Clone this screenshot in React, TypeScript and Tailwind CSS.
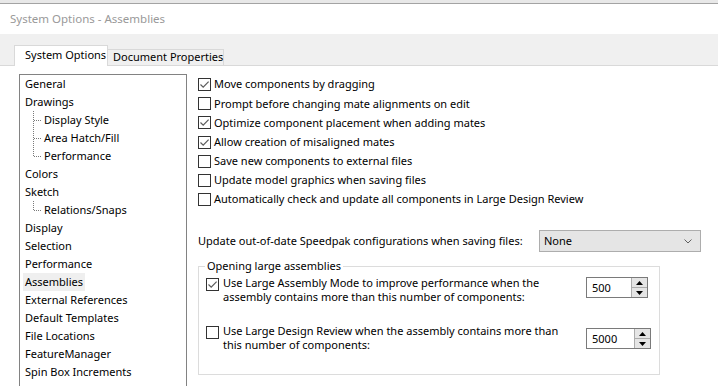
import React from 'react';

const font = { fontFamily: '"Noto Sans", "Liberation Sans", Arial, sans-serif' };

const Checkbox: React.FC<{ checked?: boolean }> = ({ checked }) => (
  <span className="flex h-[13px] w-[13px] shrink-0 items-center justify-center border border-[#333333] bg-white">
    {checked && (
      <svg width="11" height="11" viewBox="0 0 11 11">
        <path d="M1.5 5.5 L4.2 8.2 L9.6 2.6" fill="none" stroke="#5c5c5c" strokeWidth="1.2" />
      </svg>
    )}
  </span>
);

interface TreeItem {
  label: string;
  child?: boolean;
  last?: boolean;
  selected?: boolean;
}

const treeItems: TreeItem[] = [
  { label: 'General' },
  { label: 'Drawings' },
  { label: 'Display Style', child: true },
  { label: 'Area Hatch/Fill', child: true },
  { label: 'Performance', child: true, last: true },
  { label: 'Colors' },
  { label: 'Sketch' },
  { label: 'Relations/Snaps', child: true, last: true },
  { label: 'Display' },
  { label: 'Selection' },
  { label: 'Performance' },
  { label: 'Assemblies', selected: true },
  { label: 'External References' },
  { label: 'Default Templates' },
  { label: 'File Locations' },
  { label: 'FeatureManager' },
  { label: 'Spin Box Increments' },
  { label: 'View' },
];

const options = [
  { label: 'Move components by dragging', checked: true },
  { label: 'Prompt before changing mate alignments on edit', checked: false },
  { label: 'Optimize component placement when adding mates', checked: true },
  { label: 'Allow creation of misaligned mates', checked: true },
  { label: 'Save new components to external files', checked: false },
  { label: 'Update model graphics when saving files', checked: false },
  { label: 'Automatically check and update all components in Large Design Review', checked: false },
];

const Spinner: React.FC<{ value: string; width: string }> = ({ value, width }) => (
  <div className={`flex h-[21px] ${width} shrink-0 border border-[#7a7a7a] bg-white`}>
    <div className="flex flex-1 items-center pl-[5px]">{value}</div>
    <div className="flex w-[16px] flex-col border-l border-[#acacac]">
      <div className="flex flex-1 items-center justify-center border-b border-[#acacac] bg-[#e5e5e5]">
        <svg width="7" height="4" viewBox="0 0 7 4">
          <path d="M0 4 L3.5 0 L7 4 Z" fill="#000000" />
        </svg>
      </div>
      <div className="flex flex-1 items-center justify-center bg-[#e5e5e5]">
        <svg width="7" height="4" viewBox="0 0 7 4">
          <path d="M0 0 L3.5 4 L7 0 Z" fill="#000000" />
        </svg>
      </div>
    </div>
  </div>
);

const App: React.FC = () => {
  return (
    <div className="flex h-[386px] w-[718px] flex-col overflow-hidden bg-white text-[11px] text-black" style={font}>
      {/* Title bar */}
      <div className="h-[4px] shrink-0 border-b border-[#a3a3a3] bg-[#e8e8e8]"></div>
      <div className="flex h-[30px] shrink-0 items-center pl-[10px] text-[11.5px] text-[#999999]">System Options - Assemblies</div>

      {/* Tabs */}
      <div className="flex h-[32px] shrink-0 items-end border-b border-[#d9d9d9] bg-[#f0f0f0] pl-[14px]">
        <div className="relative mb-[-1px] flex h-[21px] w-[94px] items-center whitespace-nowrap border-x border-t border-[#d9d9d9] bg-white pb-[1px] pl-[10px]">
          System Options
        </div>
        <div className="flex h-[16px] w-[116px] items-center whitespace-nowrap border-r border-t border-[#d9d9d9] bg-[#f0f0f0] pl-[5px]">
          Document Properties
        </div>
      </div>

      {/* Content */}
      <div className="flex min-h-0 flex-1 items-start bg-white">
        {/* Tree */}
        <div className="ml-[19px] mt-[8px] w-[168px] shrink-0 border border-[#828282] bg-white">
          {treeItems.map((item, i) => (
            <div key={i} className={`flex h-[18px] items-center whitespace-nowrap ${item.child ? '' : 'pl-[3px]'}`}>
              {item.child && (
                <svg width="22" height="18" viewBox="0 0 22 18" className="shrink-0">
                  <line x1="13.5" y1="0" x2="13.5" y2={item.last ? 9 : 18} stroke="#7a7a7a" strokeDasharray="1 1" />
                  <line x1="14" y1="9.5" x2="22" y2="9.5" stroke="#7a7a7a" strokeDasharray="1 1" />
                </svg>
              )}
              <span className={`flex h-[18px] items-center px-[2px] ${item.selected ? 'bg-[#efefef]' : ''}`}>
                {item.label}
              </span>
            </div>
          ))}
        </div>

        {/* Options */}
        <div className="ml-[11px] flex flex-1 flex-col pt-[9px]">
          {options.map((opt, i) => (
            <div key={i} className="flex h-[19.2px] items-center gap-[3px] whitespace-nowrap">
              <Checkbox checked={opt.checked} />
              <span>{opt.label}</span>
            </div>
          ))}

          <div className="mt-[21px] flex h-[22px] items-center">
            <span className="w-[341px] whitespace-nowrap">Update out-of-date Speedpak configurations when saving files:</span>
            <div className="flex h-[22px] w-[162px] items-center justify-between border border-[#adadad] bg-[#e5e5e5] pl-[4px] pr-[8px]">
              <span>None</span>
              <svg width="8" height="5" viewBox="0 0 8 5">
                <path d="M0.5 0.5 L4 4 L7.5 0.5" fill="none" stroke="#606060" strokeWidth="1" />
              </svg>
            </div>
          </div>

          <fieldset className="mt-[6px] h-[117px] w-[462px] shrink-0 border border-[#dcdcdc]">
            <legend className="ml-[6px] px-[2px] leading-[16px]">Opening large assemblies</legend>
            <div className="mt-[2px] flex items-start">
              <div className="ml-[7px] mt-[2px]">
                <Checkbox checked />
              </div>
              <div className="ml-[4px] w-[363px] whitespace-nowrap leading-[13.5px]">
                Use Large Assembly Mode to improve performance when the
                <br />
                assembly contains more than this number of components:
              </div>
              <div className="mt-[1px]">
                <Spinner value="500" width="w-[62px]" />
              </div>
            </div>
            <div className="mt-[21px] flex items-start">
              <div className="ml-[7px] mt-[2px]">
                <Checkbox />
              </div>
              <div className="ml-[4px] w-[363px] whitespace-nowrap leading-[13.5px]">
                Use Large Design Review when the assembly contains more than
                <br />
                this number of components:
              </div>
              <div className="mt-[4px]">
                <Spinner value="5000" width="w-[65px]" />
              </div>
            </div>
          </fieldset>
        </div>
      </div>
    </div>
  );
};

export default App;
